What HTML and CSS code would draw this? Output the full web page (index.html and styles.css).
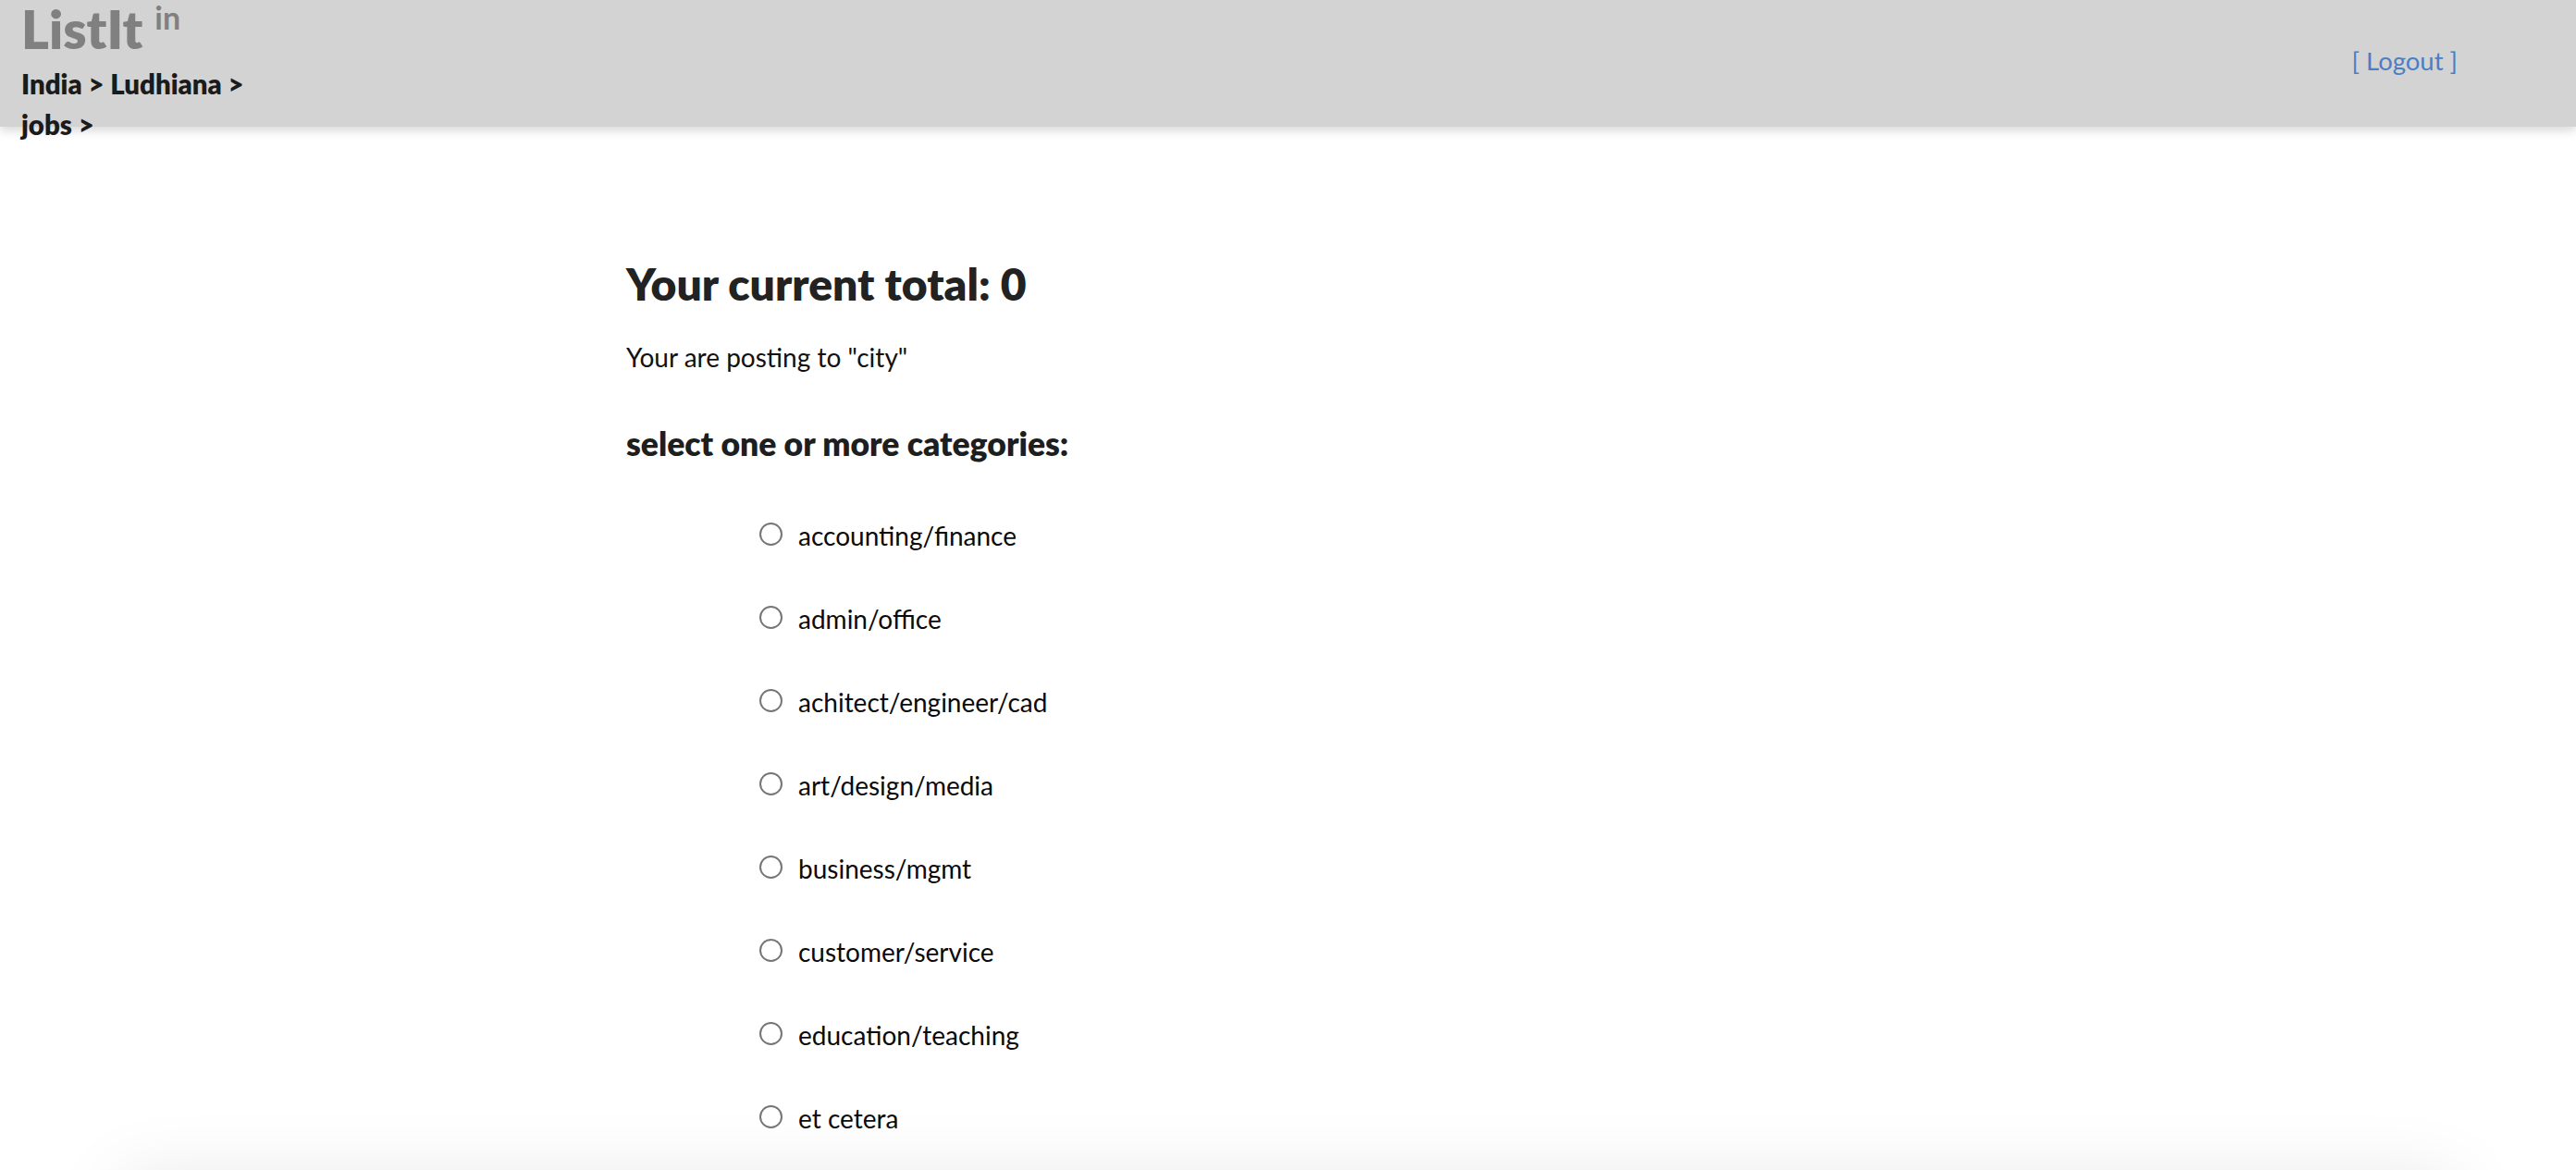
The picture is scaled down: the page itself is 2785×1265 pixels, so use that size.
FILE: index.html
```html
<!DOCTYPE html>
<html>
<head>
<meta charset="utf-8">
<title>ListIt</title>
<link rel="stylesheet" href="styles.css">
</head>
<body>
<header class="topbar">
  <div class="brand">
    <div class="logo">ListIt<span class="logo-sup">in</span></div>
    <div class="crumbs">India &gt; Ludhiana &gt; jobs &gt;</div>
  </div>
  <a class="logout" href="#">[ Logout ]</a>
</header>
<main class="content">
  <h1 class="total">Your current total: 0</h1>
  <p class="posting">Your are posting to "city"</p>
  <h3 class="cat-title">select one or more categories:</h3>
  <ul class="cats">
    <li class="cat"><input class="radio" type="radio" name="cat" id="c1"><label for="c1">accounting/finance</label></li>
    <li class="cat"><input class="radio" type="radio" name="cat" id="c2"><label for="c2">admin/office</label></li>
    <li class="cat"><input class="radio" type="radio" name="cat" id="c3"><label for="c3">achitect/engineer/cad</label></li>
    <li class="cat"><input class="radio" type="radio" name="cat" id="c4"><label for="c4">art/design/media</label></li>
    <li class="cat"><input class="radio" type="radio" name="cat" id="c5"><label for="c5">business/mgmt</label></li>
    <li class="cat"><input class="radio" type="radio" name="cat" id="c6"><label for="c6">customer/service</label></li>
    <li class="cat"><input class="radio" type="radio" name="cat" id="c7"><label for="c7">education/teaching</label></li>
    <li class="cat"><input class="radio" type="radio" name="cat" id="c8"><label for="c8">et cetera</label></li>
  </ul>
</main>
<footer class="footer"></footer>
</body>
</html>
```
FILE: styles.css
```css
* { box-sizing: border-box; }
html, body {
  margin: 0;
  padding: 0;
  background: #ffffff;
  font-family: Lato, "Open Sans", sans-serif;
}
.topbar {
  height: 137px;
  background: #d3d3d3;
  display: flex;
  justify-content: space-between;
  align-items: flex-start;
  padding: 0 128px 0 23px;
  box-shadow: 0 4px 10px rgba(0, 0, 0, 0.16);
  position: relative;
  z-index: 1;
}
.logo {
  font-size: 57px;
  line-height: 63px;
  font-weight: 800;
  color: #808080;
  white-space: nowrap;
}
.logo-sup {
  font-size: 34px;
  line-height: 34px;
  font-weight: 700;
  vertical-align: 21px;
  margin-left: 13px;
}
.crumbs {
  margin-top: 6px;
  width: 270px;
  font-size: 29.4px;
  line-height: 44px;
  font-weight: 800;
  color: #1b1b1b;
}
.logout {
  margin-top: 49px;
  font-size: 27.5px;
  line-height: 34px;
  color: #4a7fc4;
  text-decoration: none;
}
.content {
  width: 1431px;
  margin: 0 auto;
}
.total {
  margin: 141px 0 0;
  font-size: 48px;
  line-height: 58px;
  font-weight: 800;
  color: #222222;
}
.posting {
  margin: 33px 0 0;
  font-size: 28px;
  line-height: 34px;
  color: #111111;
}
.cat-title {
  margin: 55px 0 0;
  font-size: 35.5px;
  line-height: 43px;
  font-weight: 800;
  color: #1e1e1e;
}
.cats {
  list-style: none;
  margin: 33px 0 0;
  padding: 0 0 0 144px;
}
.cat {
  display: flex;
  align-items: baseline;
  padding: 28px 0;
  font-size: 28px;
  line-height: 34px;
  color: #0a0a0a;
}
.radio {
  -webkit-appearance: none;
  appearance: none;
  width: 25px;
  height: 25px;
  margin: 0 17px 0 0;
  border: 2px solid #767676;
  border-radius: 50%;
  background: #ffffff;
  flex: none;
}
.footer {
  margin: 21px 130px 0;
  height: 200px;
  background: #ffffff;
  box-shadow: 0 0 80px rgba(0, 0, 0, 0.1);
}
```
